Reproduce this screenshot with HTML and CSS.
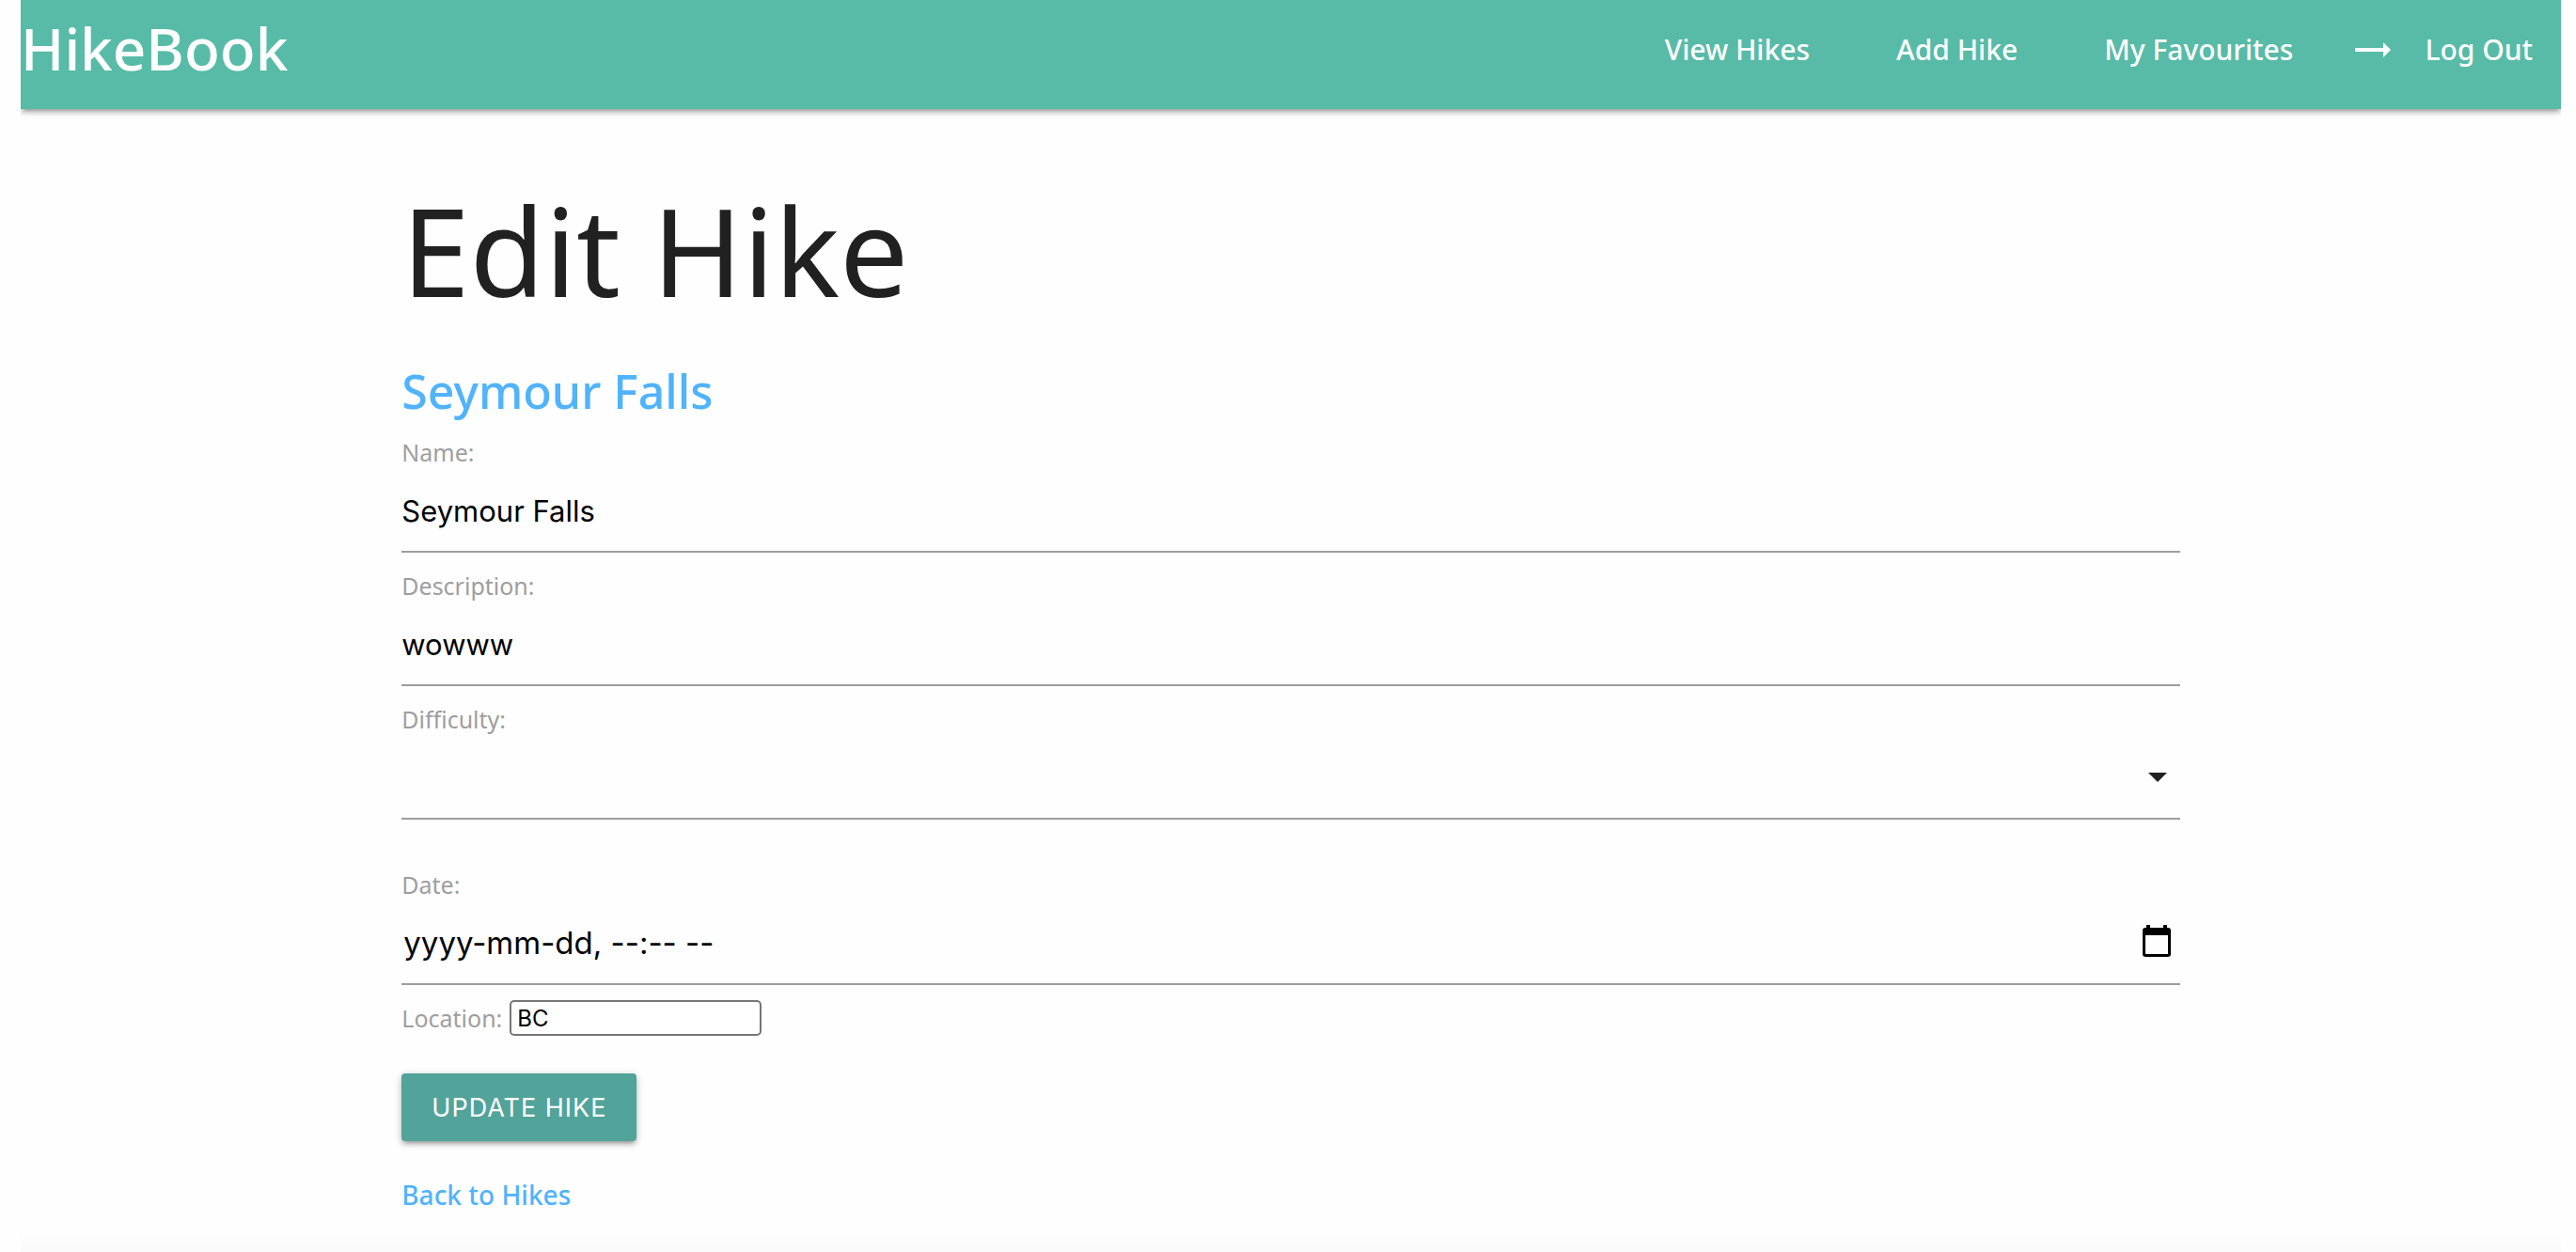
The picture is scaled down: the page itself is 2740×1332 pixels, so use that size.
FILE: index.html
```html
<!DOCTYPE html>
<html lang="en-CA">
<head>
<meta charset="utf-8">
<meta name="viewport" content="width=device-width, initial-scale=1">
<title>HikeBook</title>
<link rel="stylesheet" href="styles.css">
</head>
<body>
<header class="navbar">
  <a class="brand" href="#">HikeBook</a>
  <nav class="nav-links">
    <a href="#">View Hikes</a>
    <a href="#">Add Hike</a>
    <a href="#">My Favourites</a>
    <a class="logout" href="#"><svg class="arrow" viewBox="0 0 38 16" aria-hidden="true"><path d="M0 6H30V0L38 8L30 16V10H0Z" fill="currentColor"/></svg>Log Out</a>
  </nav>
</header>
<main class="container">
  <h1>Edit Hike</h1>
  <h2>Seymour Falls</h2>
  <form>
    <div class="field">
      <label for="name">Name:</label>
      <input class="line-input" id="name" type="text" value="Seymour Falls">
    </div>
    <div class="field">
      <label for="description">Description:</label>
      <input class="line-input" id="description" type="text" value="wowww">
    </div>
    <div class="field field-select">
      <label for="difficulty">Difficulty:</label>
      <div class="control">
        <select class="line-input" id="difficulty"><option selected></option><option>Easy</option><option>Moderate</option><option>Hard</option></select>
        <svg class="caret" viewBox="0 0 20 10" aria-hidden="true"><path d="M0 0H20L10 10Z" fill="#212121"/></svg>
      </div>
    </div>
    <div class="field">
      <label for="date">Date:</label>
      <div class="control">
        <input class="line-input date-input" id="date" type="text" placeholder="yyyy-mm-dd, --:-- --">
        <button class="picker" type="button" aria-label="Choose date"><svg viewBox="0 0 30 34" aria-hidden="true"><path fill-rule="evenodd" d="M4 0H8V3H22V0H26V3H27Q30 3 30 6V31Q30 34 27 34H3Q0 34 0 31V6Q0 3 3 3H4ZM3 11V31H27V11Z" fill="#000"/></svg></button>
      </div>
    </div>
    <div class="field field-inline">
      <label for="location">Location:</label>
      <input class="box-input" id="location" type="text" value="BC">
    </div>
    <button class="btn" type="submit">UPDATE HIKE</button>
  </form>
  <a class="back" href="#">Back to Hikes</a>
</main>
<footer class="page-end"></footer>
</body>
</html>
```
FILE: styles.css
```css
* { box-sizing: border-box; }
body {
  margin: 0 16px 0 22px;
  background: #fefefe;
  color: #212121;
  font-family: "Noto Sans", sans-serif;
  font-weight: 500;
}
a { color: #50b3fb; text-decoration: none; }

.navbar {
  display: flex;
  justify-content: space-between;
  align-items: flex-start;
  min-height: 116px;
  padding-right: 30px;
  background: #57bba7;
  box-shadow: 0 4px 4px rgba(0, 0, 0, .14), 0 6px 2px -4px rgba(0, 0, 0, .12), 0 2px 10px rgba(0, 0, 0, .2);
}
.navbar a { color: #fff; }
.brand { font-size: 62px; line-height: 102px; }
.nav-links {
  display: flex;
  gap: 92px;
  font-size: 30px;
  line-height: 106px;
}
.logout { display: flex; align-items: center; gap: 36px; margin-left: -26px; }
.arrow { width: 38px; height: 16px; }

.container { width: 70%; margin: 0 auto; padding-top: 80px; }
h1 { margin: 0 0 50px; font-size: 130px; line-height: 140px; font-weight: 400; }
h2 { margin: 0; color: #50b3fb; font-size: 50px; line-height: 60px; font-weight: 500; }

.field { padding-top: 16px; }
.field label { display: block; color: #9e9e9e; font-size: 25px; font-weight: 400; line-height: 38px; }
.field-select { margin-bottom: 34px; }
.control { display: grid; align-items: center; }
.control > * { grid-area: 1 / 1; }
.line-input {
  display: block;
  width: 100%;
  height: 88px;
  padding: 0;
  border: 0;
  border-bottom: 2px solid #9e9e9e;
  border-radius: 0;
  outline: 0;
  background: transparent;
  color: #000;
  font: 31px Inter, sans-serif;
}
select.line-input { appearance: none; }
.date-input { padding-left: 2px; font-size: 33px; }
.date-input::placeholder { color: #000; opacity: 1; }
.caret { justify-self: end; width: 20px; height: 10px; margin: 0 14px 2px 0; pointer-events: none; }
.picker {
  justify-self: end;
  width: 30px;
  height: 34px;
  margin: 0 10px 6px 0;
  padding: 0;
  border: 0;
  background: none;
}
.picker svg { display: block; width: 30px; height: 34px; }
.field-inline { display: flex; gap: 8px; }
.box-input {
  width: 268px;
  height: 38px;
  padding: 0 6px;
  border: 2px solid #767676;
  border-radius: 5px;
  background: #fff;
  color: #000;
  font: 24px Inter, sans-serif;
}
.btn {
  display: block;
  height: 72px;
  margin: 40px 0 36px;
  padding: 0 32px;
  border: 0;
  border-radius: 4px;
  background: #52a399;
  color: #fff;
  font: 27px Inter, sans-serif;
  letter-spacing: 1px;
  box-shadow: 0 4px 4px rgba(0, 0, 0, .14), 0 6px 2px -4px rgba(0, 0, 0, .12), 0 2px 10px rgba(0, 0, 0, .2);
}
.back { display: block; width: fit-content; font-size: 28px; line-height: 42px; }
.page-end { height: 20px; margin: 20px -16px 0 -22px; background: linear-gradient(#fdfdfd, #fafafa); }
```
